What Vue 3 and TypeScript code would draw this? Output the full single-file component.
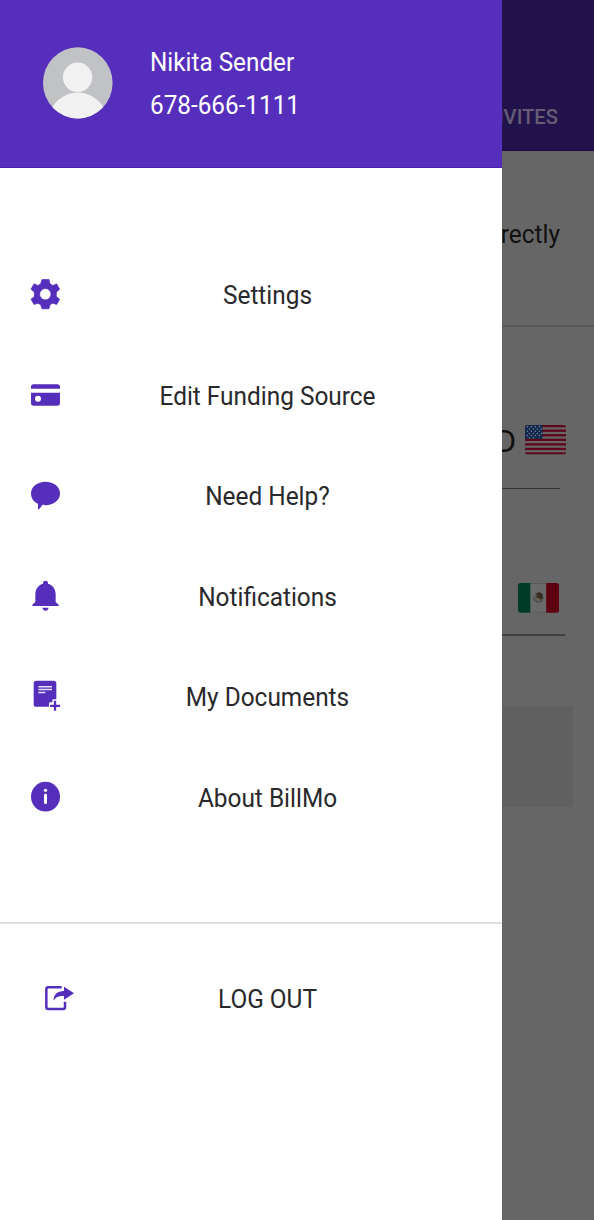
<script setup lang="ts">
interface MenuItem {
  label: string
  icon: string
  viewBox: string
}

const items: MenuItem[] = [
  { label: 'Settings', icon: 'gear', viewBox: '0 -14.5 180 180' },
  { label: 'Edit Funding Source', icon: 'card', viewBox: '0 -12 180 180' },
  { label: 'Need Help?', icon: 'chat', viewBox: '0 -11.5 180 180' },
  { label: 'Notifications', icon: 'bell', viewBox: '0 -9 180 180' },
  { label: 'My Documents', icon: 'document', viewBox: '0 -8.5 180 180' },
  { label: 'About BillMo', icon: 'info', viewBox: '0 -6 180 180' },
]

const stripes = [0, 2, 4, 6, 8, 10, 12]
const stars = Array.from({ length: 22 }, (_, i) => {
  const row = Math.floor(i / 4)
  return { x: 2.4 + (i % 4) * 4 + (row % 2) * 2, y: 1.8 + row * 2.2 }
})
</script>

<template>
  <div class="screen">
    <aside class="drawer">
      <header class="profile">
        <svg class="avatar" viewBox="0 0 70 72">
          <defs>
            <clipPath id="avatar-clip"><ellipse cx="34.800" cy="35.800" rx="34.800" ry="35.600" /></clipPath>
          </defs>
          <g clip-path="url(#avatar-clip)">
            <rect width="70" height="72" fill="#c1c2c6" />
            <circle cx="34.600" cy="30.300" r="14.700" fill="#f1f1f1" />
            <ellipse cx="34.800" cy="74" rx="29" ry="28.500" fill="#f1f1f1" />
          </g>
        </svg>
        <div class="identity">
          <span class="text">Nikita Sender</span>
          <span class="text phone">678-666-1111</span>
        </div>
      </header>

      <nav class="menu">
        <a v-for="item in items" :key="item.icon" class="row">
          <svg class="icon" :viewBox="item.viewBox">
            <path
              v-if="item.icon === 'gear'"
              fill-rule="evenodd"
              stroke="#562ebc"
              stroke-width="2"
              stroke-linejoin="round"
              d="M66 29H87L90 42L99 47L110 42L119 58L109 67V80L119 88L110 104L98 100L90 105L87 117H66L62 105L54 100L42 104L33 88L43 80V67L33 58L42 42L54 47L62 42ZM76 56A17 17 0 1 0 76 90A17 17 0 1 0 76 56Z"
            />
            <g v-else-if="item.icon === 'card'">
              <path d="M33 56V51Q33 43 41 43H112Q120 43 120 51V56Z" />
              <path fill-rule="evenodd" d="M33 68H120V99Q120 107 112 107H41Q33 107 33 99ZM54 77A9 9 0 1 0 54 95A9 9 0 1 0 54 77Z" />
            </g>
            <path v-else-if="item.icon === 'chat'" d="M76.500 36C101 36 120 51 120 71C120 91 101 106 76 106C72 106 70 106 67 105C63 112 60 117 54 120V102C41 96 33 85 33 71C33 51 52 36 76.500 36Z" />
            <g v-else-if="item.icon === 'bell'">
              <path d="M37 108V104L46 96V73C46 56 55 45 69 41V39Q69 32 76.500 32Q84 32 84 39V41C98 45 107 56 107 73V96L116 104V108Z" />
              <path d="M67 113H86Q84 122 76.500 122Q69 122 67 113Z" />
            </g>
            <g v-else-if="item.icon === 'document'">
              <path d="M49 33H101Q109 33 109 41V88H101Q97 88 97 92V97H91Q87 97 87 101V111H49Q41 111 41 103V41Q41 33 49 33Z" />
              <path d="M55 51H96M55 59H96M55 68H76" fill="none" stroke="#e5dff4" stroke-width="4.500" />
              <path d="M105 93V123M90 108H120" fill="none" stroke="#562ebc" stroke-width="7" />
            </g>
            <g v-else>
              <ellipse cx="76.500" cy="80" rx="43.500" ry="44.500" />
              <circle cx="76.500" cy="61" r="4.800" fill="#fff" />
              <rect x="72" y="71" width="9" height="31" rx="3.500" fill="#fff" />
            </g>
          </svg>
          <span class="label text">{{ item.label }}</span>
        </a>
      </nav>

      <a class="row logout">
        <svg class="icon" viewBox="0 -1 180 180">
          <path d="M95 51H55Q49 51 49 57V110Q49 116 55 116H99Q105 116 105 110V94" fill="none" stroke="#562ebc" stroke-width="7.500" />
          <path d="M70 91C72 72 80 63 102 62V49L132 69L102 88V77C86 76 78 80 70 91Z" />
        </svg>
        <span class="label text">LOG OUT</span>
      </a>
    </aside>

    <main class="page">
      <div class="tabs"><span class="text">INVITES</span></div>
      <div class="notice"><span class="text">directly</span></div>
      <div class="field usd">
        <span class="currency">USD</span>
        <svg class="flag" viewBox="0 0 41 30">
          <defs><clipPath id="us-clip"><rect width="41" height="29.600" rx="2.500" /></clipPath></defs>
          <g clip-path="url(#us-clip)">
            <rect width="41" height="30" fill="#686468" />
            <rect v-for="s in stripes" :key="s" :y="s * 2.28" width="41" height="2.280" fill="#5b0719" />
            <rect width="17.500" height="13.800" fill="#13284a" />
            <circle v-for="(star, i) in stars" :key="i" :cx="star.x" :cy="star.y" r=".75" fill="#72849d" />
          </g>
        </svg>
      </div>
      <div class="field mxn">
        <svg class="flag" viewBox="0 0 41 30">
          <defs><clipPath id="mx-clip"><rect width="41" height="29.800" rx="2.500" /></clipPath></defs>
          <g clip-path="url(#mx-clip)">
            <rect width="41" height="30" fill="#6a6a6a" />
            <path d="M12 .5H28M12 29.300H28" stroke="#595959" />
            <rect width="12.300" height="30" fill="#003b27" />
            <rect x="28.200" width="13" height="30" fill="#5d0010" />
            <circle cx="20.300" cy="14.500" r="5" fill="#62615b" />
            <path d="M15.500 14Q17 19.500 21 19T25 14" fill="none" stroke="#4b514b" stroke-width="1.200" />
            <path d="M17.500 11L21 9L24.500 11L25 15L22 17L20.500 14.500L17 15L19.500 12.500Z" fill="#352c22" />
            <path d="M19.500 15L22.500 16.500L20 17.500Z" fill="#6d6139" />
          </g>
        </svg>
      </div>
      <div class="panel"></div>
    </main>
  </div>
</template>

<style>
body {
  margin: 0;
}
</style>

<style scoped>
.screen {
  display: flex;
  width: 594px;
  height: 1220px;
  overflow: hidden;
  font-family: Roboto, sans-serif;
  font-size: 24.4px;
  line-height: 30px;
  color: #29292b;
}
.text {
  display: block;
  white-space: nowrap;
  transform: scaleY(1.04);
}
.drawer {
  flex: none;
  width: 502px;
  background: #fff;
}
.profile {
  display: flex;
  box-sizing: border-box;
  height: 168px;
  padding: 47px 0 0 43px;
  background: #562ebc;
  border-bottom: 1px solid #4a1eb2;
  color: #fff;
}
.avatar {
  width: 70px;
  height: 72px;
}
.identity {
  margin: 1px 0 0 37px;
  font-size: 24.3px;
}
.phone {
  margin-top: 13px;
}
.menu {
  height: 677px;
  padding-top: 77px;
  border-bottom: 2px solid #e0e0e0;
}
.row {
  display: flex;
  align-items: center;
  height: 100.5px;
}
.icon {
  flex: none;
  width: 60px;
  height: 60px;
  margin-left: 20px;
  fill: #562ebc;
}
.label {
  flex: 1;
  margin-left: -47px;
  padding-top: 2px;
  text-align: center;
}
.logout {
  height: 152px;
}
.logout .icon {
  margin-left: 30px;
}
.logout .label {
  margin-left: -57px;
  padding-top: 0;
}
.page {
  flex: 1;
  min-width: 0;
  overflow: hidden;
  background: #666;
}
.tabs,
.notice,
.field {
  display: flex;
  box-sizing: border-box;
  justify-content: flex-end;
}
.tabs {
  height: 151px;
  padding: 102px 36px 0 0;
  background: #22124b;
  border-bottom: 1px solid #1c0b43;
  color: #645d75;
  font-size: 20.2px;
  font-weight: 500;
}
.notice {
  height: 176px;
  padding: 70px 34px 0 0;
  border-bottom: 2px solid #595959;
  color: #111;
}
.flag {
  flex: none;
  width: 41px;
  height: 30px;
}
.usd {
  height: 162px;
  padding: 98px 0 0;
  margin-right: 34px;
  border-bottom: 1px solid #333;
}
.usd .flag {
  margin-right: -6px;
}
.currency {
  margin: 2px 9px 0 0;
  color: #111;
  font-size: 31px;
  font-weight: 400;
}
.mxn {
  height: 147px;
  padding: 94px 6px 0 0;
  margin-right: 29px;
  border-bottom: 2px solid #414141;
}
.panel {
  height: 101px;
  margin: 70px 21px 0 0;
  background: #606060;
}
</style>
